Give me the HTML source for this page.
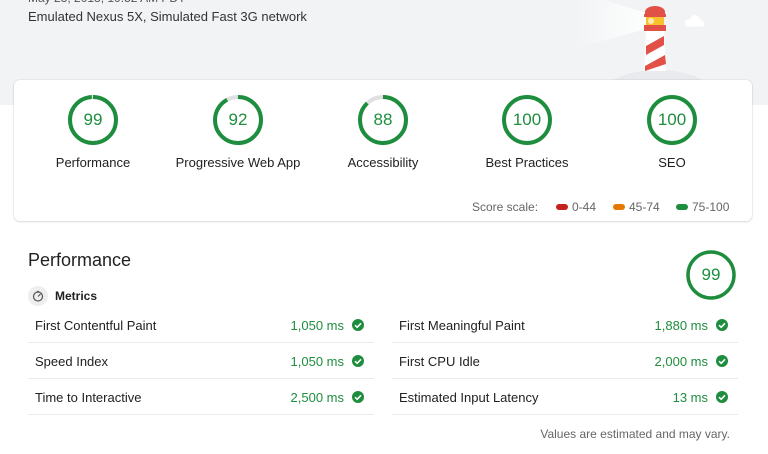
<!DOCTYPE html>
<html><head><meta charset="utf-8"><style>
*{margin:0;padding:0;box-sizing:border-box}
body{width:768px;height:454px;overflow:hidden;background:#fff;font-family:"Liberation Sans",Arial,sans-serif;color:#212121;position:relative}
.hdr{position:absolute;left:0;top:0;width:768px;height:105px;background:#f1f3f4}
.t{position:absolute;white-space:nowrap}
.card{position:absolute;left:14px;top:80px;width:738px;height:141px;background:#fff;border-radius:6px;box-shadow:0 1px 2px rgba(0,0,0,.12),0 0 0 1px rgba(0,0,0,.04)}
.g{position:absolute;width:50px;height:50px}
.g span{position:absolute;left:0;top:0;width:50px;line-height:50px;text-align:center;color:#1e8e3e;font-size:17px}
.lbl{position:absolute;top:155px;font-size:13px;width:160px;text-align:center;margin-left:-80px}
.row{position:absolute;height:36px;border-bottom:1px solid #ebebeb;font-size:13px}
.row .n{position:absolute;left:7px;top:11px}
.row .v{position:absolute;right:30px;top:11px;color:#1e8e3e}
.row svg{position:absolute;right:10px;top:12px}
</style></head><body>
<div class="hdr"></div>
<div class="t" style="left:28px;top:-9px;font-size:12px;color:#555">May 23, 2018, 10:52 AM PDT</div>
<div class="t" style="left:28px;top:9px;font-size:13px;color:#333">Emulated Nexus 5X, Simulated Fast 3G network</div>
<svg style="position:absolute;left:500px;top:0" width="268" height="90">
<defs><linearGradient id="b" x1="1" x2="0"><stop offset="0" stop-color="#fff" stop-opacity=".95"/><stop offset="1" stop-color="#fff" stop-opacity="0"/></linearGradient></defs>
<polygon points="150,14 150,28 70,50 70,-10" fill="url(#b)"/>
<ellipse cx="158" cy="102" rx="62" ry="32" fill="#e8eaed"/>
<path d="M145,15 h20 v-3 a10,6 0 0 0 -20,0 z" fill="#e25147"/>
<rect x="144" y="14" width="22" height="3" fill="#e25147"/>
<rect x="146" y="17" width="18" height="8" fill="#fbc02d"/>
<circle cx="151" cy="21" r="3" fill="#fde9b5"/>
<rect x="144" y="25" width="22" height="6" fill="#e25147"/>
<polygon points="146,31 164,31 166,71 144,71" fill="#fff"/>
<polygon points="164,36 164,45 146,55 146,46" fill="#e25147"/>
<polygon points="165,55 166,64 145,71 145,66" fill="#e25147"/>
<circle cx="195" cy="20" r="5" fill="#fff"/>
<circle cx="188" cy="23" r="3.5" fill="#fff"/>
<circle cx="201" cy="23.5" r="3" fill="#fff"/>
<rect x="186" y="22" width="18" height="4.5" rx="2" fill="#fff"/>
</svg>
<div class="card"></div>
<div class="g" style="left:68px;top:95px"><svg width="50" height="50"><circle cx="25" cy="25" r="23" fill="none" stroke="#e0e0e0" stroke-width="4"/><circle cx="25" cy="25" r="23" fill="none" stroke="#1e8e3e" stroke-width="4" stroke-dasharray="143 200" transform="rotate(-90 25 25)"/></svg><span>99</span></div>
<div class="g" style="left:213px;top:95px"><svg width="50" height="50"><circle cx="25" cy="25" r="23" fill="none" stroke="#e0e0e0" stroke-width="4"/><circle cx="25" cy="25" r="23" fill="none" stroke="#1e8e3e" stroke-width="4" stroke-dasharray="133 200" transform="rotate(-90 25 25)"/></svg><span>92</span></div>
<div class="g" style="left:358px;top:95px"><svg width="50" height="50"><circle cx="25" cy="25" r="23" fill="none" stroke="#e0e0e0" stroke-width="4"/><circle cx="25" cy="25" r="23" fill="none" stroke="#1e8e3e" stroke-width="4" stroke-dasharray="127 200" transform="rotate(-90 25 25)"/></svg><span>88</span></div>
<div class="g" style="left:502px;top:95px"><svg width="50" height="50"><circle cx="25" cy="25" r="23" fill="none" stroke="#1e8e3e" stroke-width="4"/></svg><span>100</span></div>
<div class="g" style="left:647px;top:95px"><svg width="50" height="50"><circle cx="25" cy="25" r="23" fill="none" stroke="#1e8e3e" stroke-width="4"/></svg><span>100</span></div>
<div class="lbl" style="left:93px">Performance</div>
<div class="lbl" style="left:238px">Progressive Web App</div>
<div class="lbl" style="left:383px">Accessibility</div>
<div class="lbl" style="left:527px">Best Practices</div>
<div class="lbl" style="left:672px">SEO</div>
<div class="t" style="left:472px;top:200px;font-size:12px;color:#666">Score scale:</div>
<div style="position:absolute;left:556px;top:204px;width:12px;height:6px;border-radius:3px;background:#c5221f"></div>
<div class="t" style="left:572px;top:200px;font-size:12px;color:#666">0-44</div>
<div style="position:absolute;left:613px;top:204px;width:12px;height:6px;border-radius:3px;background:#e67700"></div>
<div class="t" style="left:629px;top:200px;font-size:12px;color:#666">45-74</div>
<div style="position:absolute;left:676px;top:204px;width:12px;height:6px;border-radius:3px;background:#1e8e3e"></div>
<div class="t" style="left:692px;top:200px;font-size:12px;color:#666">75-100</div>
<div class="t" style="left:28px;top:250px;font-size:18px">Performance</div>
<div class="g" style="left:686px;top:250px"><svg width="50" height="50"><circle cx="25" cy="25" r="23" fill="none" stroke="#1e8e3e" stroke-width="3.5"/></svg><span>99</span></div>
<svg style="position:absolute;left:28px;top:286px" width="20" height="20"><circle cx="10" cy="10" r="10" fill="#eee"/><circle cx="10" cy="10.5" r="4.5" fill="none" stroke="#555" stroke-width="1.2"/><path d="M10,10.5 L12.5,8 M9,5.5 h2" stroke="#555" stroke-width="1.2"/></svg>
<div class="t" style="left:55px;top:289px;font-size:12px;font-weight:bold">Metrics</div>
<div class="row" style="left:28px;top:307px;width:346px"><span class="n">First Contentful Paint</span><span class="v">1,050 ms</span><svg width="12" height="12"><circle cx="6" cy="6" r="6" fill="#1e8e3e"/><path d="M3,6.2 L5.2,8.3 L9,4.3" stroke="#fff" stroke-width="1.6" fill="none"/></svg></div>
<div class="row" style="left:28px;top:343px;width:346px"><span class="n">Speed Index</span><span class="v">1,050 ms</span><svg width="12" height="12"><circle cx="6" cy="6" r="6" fill="#1e8e3e"/><path d="M3,6.2 L5.2,8.3 L9,4.3" stroke="#fff" stroke-width="1.6" fill="none"/></svg></div>
<div class="row" style="left:28px;top:379px;width:346px"><span class="n">Time to Interactive</span><span class="v">2,500 ms</span><svg width="12" height="12"><circle cx="6" cy="6" r="6" fill="#1e8e3e"/><path d="M3,6.2 L5.2,8.3 L9,4.3" stroke="#fff" stroke-width="1.6" fill="none"/></svg></div>
<div class="row" style="left:392px;top:307px;width:346px"><span class="n">First Meaningful Paint</span><span class="v">1,880 ms</span><svg width="12" height="12"><circle cx="6" cy="6" r="6" fill="#1e8e3e"/><path d="M3,6.2 L5.2,8.3 L9,4.3" stroke="#fff" stroke-width="1.6" fill="none"/></svg></div>
<div class="row" style="left:392px;top:343px;width:346px"><span class="n">First CPU Idle</span><span class="v">2,000 ms</span><svg width="12" height="12"><circle cx="6" cy="6" r="6" fill="#1e8e3e"/><path d="M3,6.2 L5.2,8.3 L9,4.3" stroke="#fff" stroke-width="1.6" fill="none"/></svg></div>
<div class="row" style="left:392px;top:379px;width:346px"><span class="n">Estimated Input Latency</span><span class="v">13 ms</span><svg width="12" height="12"><circle cx="6" cy="6" r="6" fill="#1e8e3e"/><path d="M3,6.2 L5.2,8.3 L9,4.3" stroke="#fff" stroke-width="1.6" fill="none"/></svg></div>
<div class="t" style="right:38px;top:427px;font-size:12px;color:#666">Values are estimated and may vary.</div>
</body></html>
